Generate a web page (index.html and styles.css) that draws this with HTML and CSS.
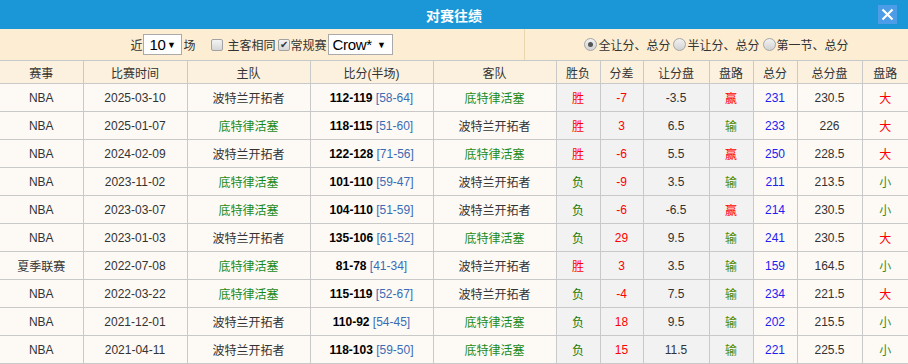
FILE: index.html
```html
<!DOCTYPE html>
<html lang="zh-CN">
<head>
  <meta charset="UTF-8" />
  <meta name="viewport" content="width=device-width, initial-scale=1.0" />
  <title>对赛往绩</title>
  <link rel="stylesheet" href="styles.css">
</head>
<body>

  <!-- Title Bar -->
  <div class="title-bar">
    <span class="title">对赛往绩</span>
    <a class="close-btn" href="#">
      <svg width="19" height="19" viewBox="0 0 19 19">
        <rect width="19" height="19" fill="#4c9ce8" />
        <path d="M4.5 4.5 L14.5 14.5 M14.5 4.5 L4.5 14.5" stroke="#fff" stroke-width="2.2" />
      </svg>
    </a>
  </div>

  <!-- Filters -->
  <div class="filter-bar">
    <div class="filter-left">
      <span>近</span><span class="sel">10<i class="arrow">▼</i></span><span>场</span>
      <span class="chk gap-l"></span><span class="lbl">主客相同</span>
      <span class="chk checked">✔</span><span>常规赛</span>
      <span class="sel sel-wide">Crow*<i class="arrow">▼</i></span>
    </div>
    <div class="filter-right">
      <span class="radio checked"></span><span>全让分、总分</span>
      <span class="radio"></span><span>半让分、总分</span>
      <span class="radio"></span><span>第一节、总分</span>
    </div>
  </div>

  <!-- Results Table -->
  <table class="results">
    <colgroup>
      <col style="width:83px"><col style="width:104px"><col style="width:123px"><col style="width:123px">
      <col style="width:123px"><col style="width:44px"><col style="width:43px"><col style="width:66px">
      <col style="width:44px"><col style="width:44px"><col style="width:65px"><col style="width:46px">
    </colgroup>
    <thead>
      <tr>
        <th>赛事</th><th>比赛时间</th><th>主队</th><th>比分(半场)</th><th>客队</th><th>胜负</th>
        <th>分差</th><th>让分盘</th><th>盘路</th><th>总分</th><th>总分盘</th><th>盘路</th>
      </tr>
    </thead>
    <tbody>
      <tr>
        <td>NBA</td><td>2025-03-10</td><td>波特兰开拓者</td>
        <td><b>112-119</b> <span class="half">[58-64]</span></td><td class="green">底特律活塞</td>
        <td class="g red">胜</td><td class="g red">-7</td><td class="g">-3.5</td><td class="g red">赢</td>
        <td class="blue">231</td><td>230.5</td><td class="red">大</td>
      </tr>
      <tr>
        <td>NBA</td><td>2025-01-07</td><td class="green">底特律活塞</td>
        <td><b>118-115</b> <span class="half">[51-60]</span></td><td>波特兰开拓者</td>
        <td class="g red">胜</td><td class="g red">3</td><td class="g">6.5</td><td class="g olive">输</td>
        <td class="blue">233</td><td>226</td><td class="red">大</td>
      </tr>
      <tr>
        <td>NBA</td><td>2024-02-09</td><td>波特兰开拓者</td>
        <td><b>122-128</b> <span class="half">[71-56]</span></td><td class="green">底特律活塞</td>
        <td class="g red">胜</td><td class="g red">-6</td><td class="g">5.5</td><td class="g red">赢</td>
        <td class="blue">250</td><td>228.5</td><td class="red">大</td>
      </tr>
      <tr>
        <td>NBA</td><td>2023-11-02</td><td class="green">底特律活塞</td>
        <td><b>101-110</b> <span class="half">[59-47]</span></td><td>波特兰开拓者</td>
        <td class="g lose">负</td><td class="g red">-9</td><td class="g">3.5</td><td class="g olive">输</td>
        <td class="blue">211</td><td>213.5</td><td class="small">小</td>
      </tr>
      <tr>
        <td>NBA</td><td>2023-03-07</td><td class="green">底特律活塞</td>
        <td><b>104-110</b> <span class="half">[51-59]</span></td><td>波特兰开拓者</td>
        <td class="g lose">负</td><td class="g red">-6</td><td class="g">-6.5</td><td class="g red">赢</td>
        <td class="blue">214</td><td>230.5</td><td class="small">小</td>
      </tr>
      <tr>
        <td>NBA</td><td>2023-01-03</td><td>波特兰开拓者</td>
        <td><b>135-106</b> <span class="half">[61-52]</span></td><td class="green">底特律活塞</td>
        <td class="g lose">负</td><td class="g red">29</td><td class="g">9.5</td><td class="g olive">输</td>
        <td class="blue">241</td><td>230.5</td><td class="red">大</td>
      </tr>
      <tr>
        <td>夏季联赛</td><td>2022-07-08</td><td class="green">底特律活塞</td>
        <td><b>81-78</b> <span class="half">[41-34]</span></td><td>波特兰开拓者</td>
        <td class="g red">胜</td><td class="g red">3</td><td class="g">3.5</td><td class="g olive">输</td>
        <td class="blue">159</td><td>164.5</td><td class="small">小</td>
      </tr>
      <tr>
        <td>NBA</td><td>2022-03-22</td><td class="green">底特律活塞</td>
        <td><b>115-119</b> <span class="half">[52-67]</span></td><td>波特兰开拓者</td>
        <td class="g lose">负</td><td class="g red">-4</td><td class="g">7.5</td><td class="g olive">输</td>
        <td class="blue">234</td><td>221.5</td><td class="red">大</td>
      </tr>
      <tr>
        <td>NBA</td><td>2021-12-01</td><td>波特兰开拓者</td>
        <td><b>110-92</b> <span class="half">[54-45]</span></td><td class="green">底特律活塞</td>
        <td class="g lose">负</td><td class="g red">18</td><td class="g">9.5</td><td class="g olive">输</td>
        <td class="blue">202</td><td>215.5</td><td class="small">小</td>
      </tr>
      <tr>
        <td>NBA</td><td>2021-04-11</td><td>波特兰开拓者</td>
        <td><b>118-103</b> <span class="half">[59-50]</span></td><td class="green">底特律活塞</td>
        <td class="g lose">负</td><td class="g red">15</td><td class="g">11.5</td><td class="g olive">输</td>
        <td class="blue">221</td><td>225.5</td><td class="small">小</td>
      </tr>
    </tbody>
  </table>

</body>
</html>
```

FILE: styles.css
```css
* {
  margin: 0;
  padding: 0;
  box-sizing: border-box;
}

html, body {
  height: 100%;
  background-color: #fdfaf6;
  font-family: 'Liberation Sans', 'Noto Sans CJK SC', sans-serif;
  font-size: 12px;
  color: #333;
  overflow: hidden;
}

/* === TITLE BAR === */
.title-bar {
  position: relative;
  height: 29px;
  background-color: #1b96d6;
  display: flex;
  justify-content: center;
  align-items: center;
}

.title {
  color: #fff;
  font-size: 14px;
  font-weight: bold;
}

.close-btn {
  position: absolute;
  top: 5px;
  right: 11px;
  width: 19px;
  height: 19px;
  display: block;
}

.close-btn svg {
  display: block;
}

/* === FILTER BAR === */
.filter-bar {
  height: 31px;
  display: flex;
  background-color: #fdedd2;
  color: #333;
}

.filter-left,
.filter-right {
  display: flex;
  justify-content: center;
  align-items: center;
}

.filter-left {
  width: 525px;
  border-right: 1px solid #ead6ac;
}

.filter-right {
  flex: 1;
}

.sel {
  display: inline-flex;
  align-items: center;
  height: 21px;
  width: 39px;
  margin: 0 1px;
  padding-left: 5px;
  background: #fff;
  border: 1px solid #aaa;
  color: #000;
  font-size: 15px;
  letter-spacing: -0.3px;
}

.sel-wide {
  width: 65px;
  padding-left: 4px;
}

.arrow {
  font-style: normal;
  font-size: 9px;
  margin-left: auto;
  margin-right: 6px;
}

.chk {
  display: inline-flex;
  justify-content: center;
  align-items: center;
  width: 12px;
  height: 12px;
  margin-right: 1px;
  border: 1px solid #a2a2a2;
  border-radius: 2px;
  background: linear-gradient(#f4f4f4, #d6d6d6);
  font-size: 10px;
  color: #333;
  line-height: 1;
}

.gap-l {
  margin-left: 15px;
  margin-right: 5px;
}

.lbl {
  margin-right: 2px;
}

.radio {
  position: relative;
  display: inline-block;
  width: 13px;
  height: 13px;
  margin-right: 1px;
  border: 1px solid #a6a6a6;
  border-radius: 50%;
  background: linear-gradient(#f2f2f2, #d2d2d2);
}

.radio.checked::after {
  content: "";
  position: absolute;
  left: 3px;
  top: 3px;
  width: 5px;
  height: 5px;
  border-radius: 50%;
  background: #555;
}

.filter-right span + .radio {
  margin-left: 3px;
}

/* === RESULTS TABLE === */
.results {
  width: 908px;
  table-layout: fixed;
  border-collapse: collapse;
}

.results th,
.results td {
  border: 1px solid #c9c9c9;
  text-align: center;
  white-space: nowrap;
  overflow: hidden;
  font-weight: normal;
}

.results tr > :first-child {
  border-left: none;
}

.results tr > :last-child {
  border-right: none;
}

.results th {
  height: 23px;
  background-color: #fbf1de;
  color: #333;
}

.results td {
  height: 28px;
  background-color: #fdfaf6;
}

.results td.g {
  background-color: #f2f2f2;
}

.results b {
  color: #000;
}

.half {
  color: #3a6cb4;
}

.green {
  color: #1a8a1a;
}

.red {
  color: #f00;
}

.lose {
  color: #1a7a00;
  font-weight: bold;
}

.olive {
  color: #4e8a00;
}

.blue {
  color: #2121f0;
}

.small {
  color: #3a8a1a;
}
```
